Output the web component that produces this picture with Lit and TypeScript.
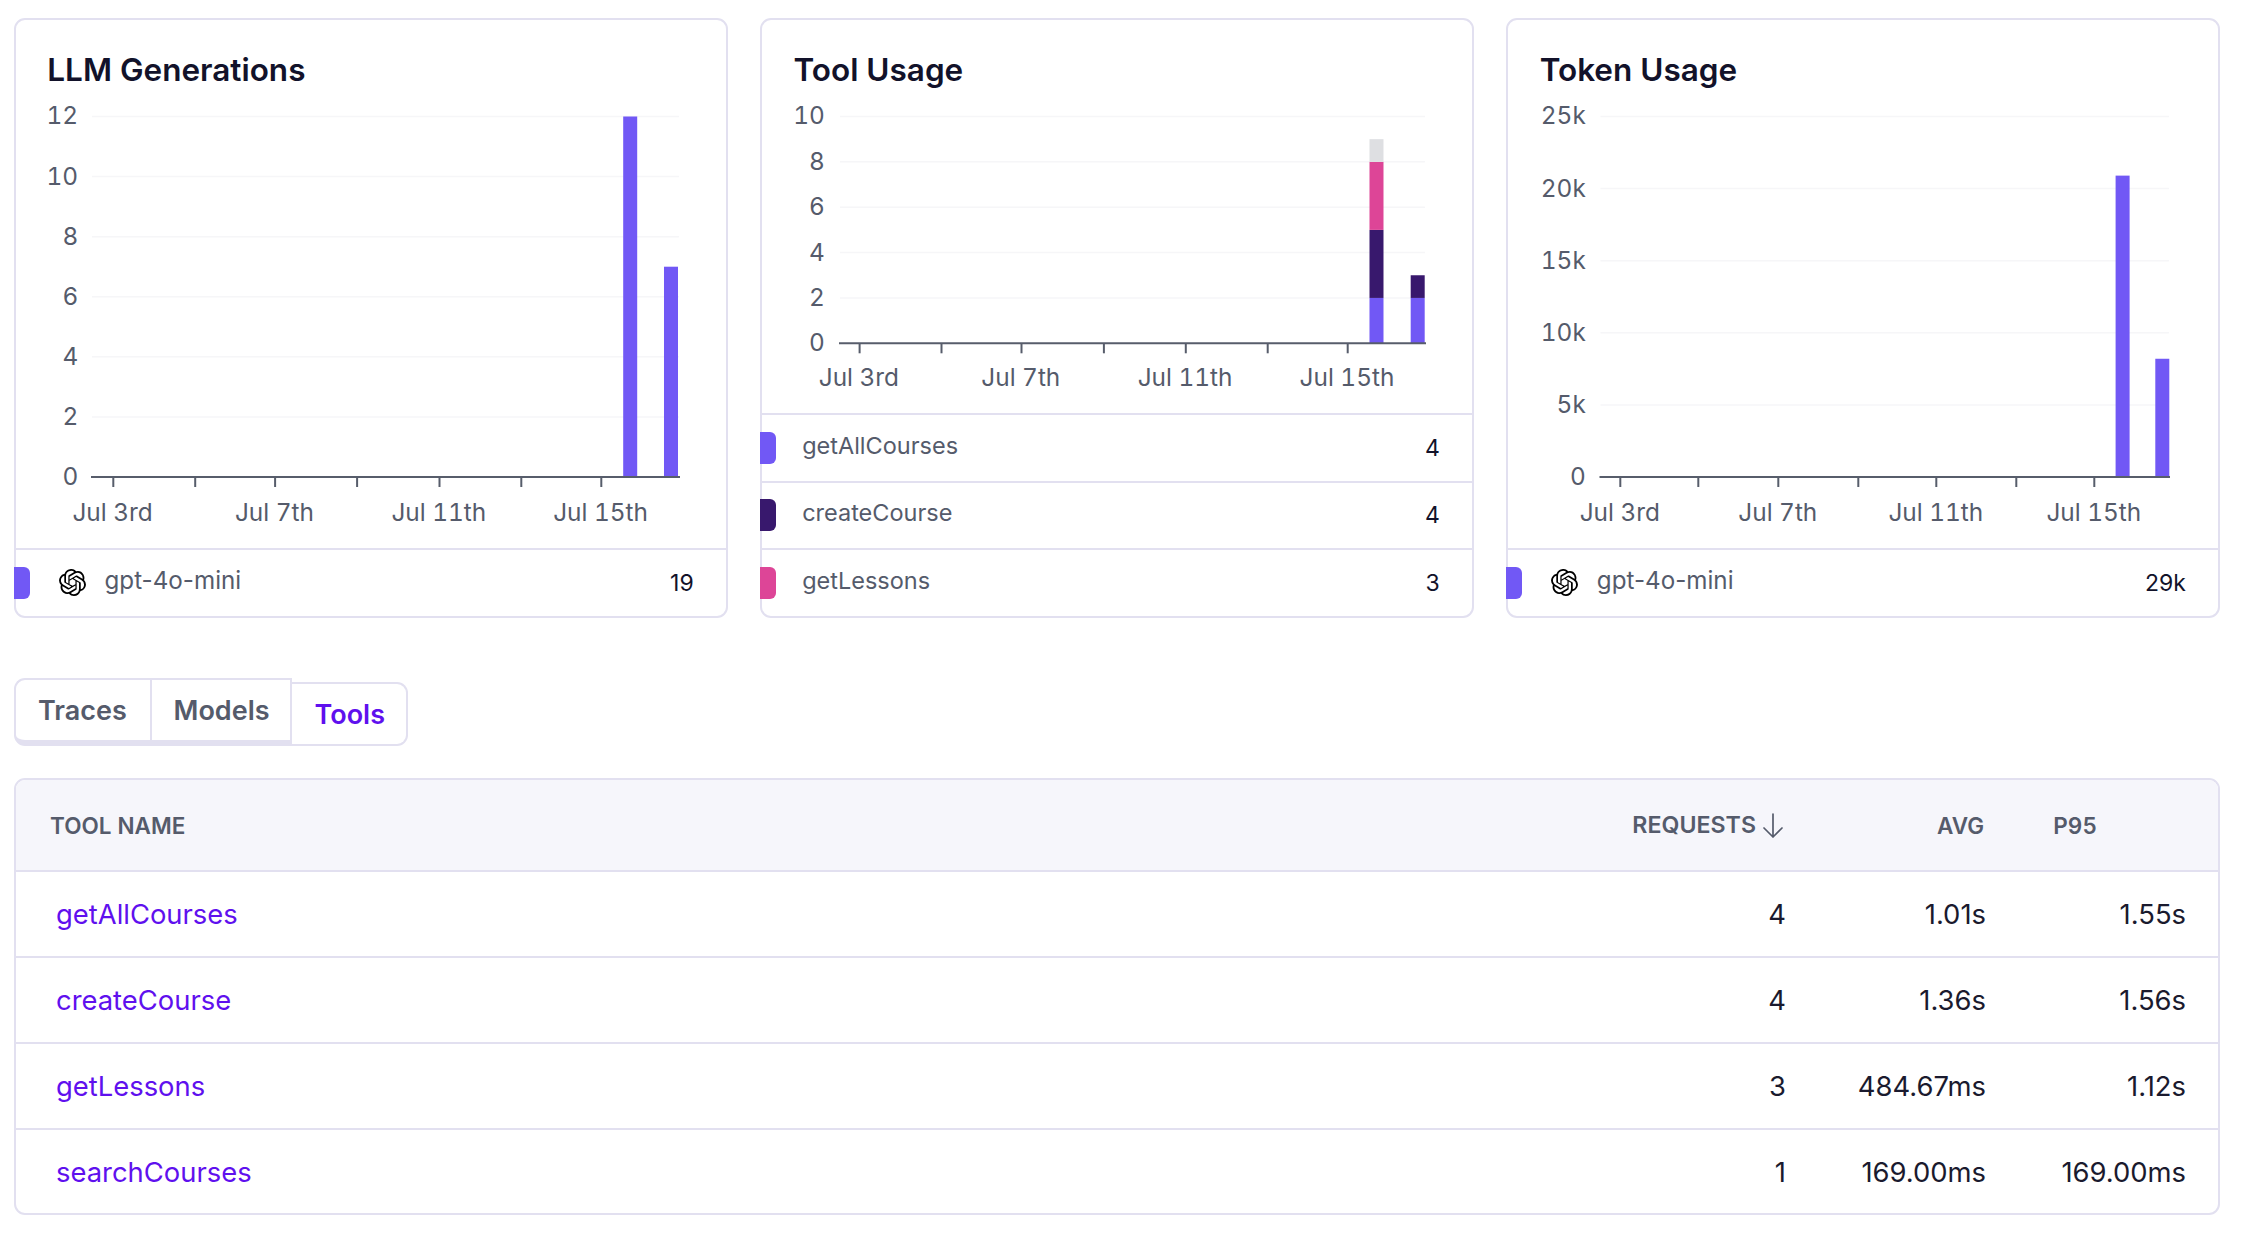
import { LitElement, html, css, svg } from "lit";
import { customElement } from "lit/decorators.js";

const PURPLE = "#7158f5";
const DARK = "#38186d";
const PINK = "#dd4597";
const GRAY = "#dedfe2";
const OPENAI =
  "M22.2819 9.8211a5.9847 5.9847 0 0 0-.5157-4.9108 6.0462 6.0462 0 0 0-6.5098-2.9A6.0651 6.0651 0 0 0 4.9807 4.1818a5.9847 5.9847 0 0 0-3.9977 2.9 6.0462 6.0462 0 0 0 .7427 7.0966 5.98 5.98 0 0 0 .511 4.9107 6.051 6.051 0 0 0 6.5146 2.9001A5.9847 5.9847 0 0 0 13.2599 24a6.0557 6.0557 0 0 0 5.7718-4.2058 5.9894 5.9894 0 0 0 3.9977-2.9001 6.0557 6.0557 0 0 0-.7475-7.0729zm-9.022 12.6081a4.4755 4.4755 0 0 1-2.8764-1.0408l.1419-.0804 4.7783-2.7582a.7948.7948 0 0 0 .3927-.6813v-6.7369l2.02 1.1686a.071.071 0 0 1 .038.052v5.5826a4.504 4.504 0 0 1-4.4945 4.4944zm-9.6607-4.1254a4.4708 4.4708 0 0 1-.5346-3.0137l.142.0852 4.783 2.7582a.7712.7712 0 0 0 .7806 0l5.8428-3.3685v2.3324a.0804.0804 0 0 1-.0332.0615L9.74 19.9502a4.4992 4.4992 0 0 1-6.1408-1.6464zM2.3408 7.8956a4.485 4.485 0 0 1 2.3655-1.9728V11.6a.7664.7664 0 0 0 .3879.6765l5.8144 3.3543-2.0201 1.1685a.0757.0757 0 0 1-.071 0l-4.8303-2.7865A4.504 4.504 0 0 1 2.3408 7.872zm16.5963 3.8558L13.1038 8.364 15.1192 7.2a.0757.0757 0 0 1 .071 0l4.8303 2.7913a4.4944 4.4944 0 0 1-.6765 8.1042v-5.6772a.79.79 0 0 0-.407-.667zm2.0107-3.0231l-.142-.0852-4.7735-2.7818a.7759.7759 0 0 0-.7854 0L9.409 9.2297V6.8974a.0662.0662 0 0 1 .0284-.0615l4.8303-2.7866a4.4992 4.4992 0 0 1 6.6802 4.66zM8.3065 12.863l-2.02-1.1638a.0804.0804 0 0 1-.038-.0567V6.0742a4.4992 4.4992 0 0 1 7.3757-3.4537l-.142.0805L8.704 5.459a.7948.7948 0 0 0-.3927.6813zm1.0976-2.3654l2.602-1.4998 2.6069 1.4998v2.9994l-2.5974 1.4997-2.6067-1.4997Z";

interface Seg { v: number; c: string }
interface Chart {
  title: string;
  svgH: number;
  y0: number;
  yTop: number;
  max: number;
  ticks: { v: number; l: string }[];
  gridL: number;
  gridR: number;
  labelR: number;
  xTicks: number[];
  xLabels: [number, string][];
  labelY: number;
  bars: { x: number; segs: Seg[] }[];
  legend: { name: string; color: string; value: string; icon?: boolean }[];
}

const T = 100; // page y at which the svg begins (title block ends)
const xl = (a: number, b: number, c: number, d: number): [number, string][] => [
  [a, "Jul 3rd"],
  [b, "Jul 7th"],
  [c, "Jul 11th"],
  [d, "Jul 15th"],
];

const CHARTS: Chart[] = [
  {
    title: "LLM Generations",
    svgH: 448.1,
    y0: 477 - T,
    yTop: 116.5 - T,
    max: 12,
    ticks: [0, 2, 4, 6, 8, 10, 12].map((v) => ({ v, l: String(v) })),
    gridL: 77,
    gridR: 664,
    labelR: 63.2,
    xTicks: [98.3, 180.2, 260.1, 342.1, 424.5, 506.3, 586.3],
    xLabels: xl(97.6, 259.4, 423.8, 585.6),
    labelY: 521 - T,
    bars: [
      { x: 608.2, segs: [{ v: 12, c: PURPLE }] },
      { x: 649, segs: [{ v: 7, c: PURPLE }] },
    ],
    legend: [{ name: "gpt-4o-mini", color: PURPLE, value: "19", icon: true }],
  },
  {
    title: "Tool Usage",
    svgH: 313.3,
    y0: 343.3 - T,
    yTop: 116.5 - T,
    max: 10,
    ticks: [0, 2, 4, 6, 8, 10].map((v) => ({ v, l: String(v) })),
    gridL: 79,
    gridR: 664,
    labelR: 63.9,
    xTicks: [98.6, 180.5, 260.5, 342.9, 424.8, 506.7, 586.7],
    xLabels: xl(97.9, 259.8, 424.1, 586),
    labelY: 386 - T,
    bars: [
      {
        x: 608.5,
        segs: [
          { v: 2, c: PURPLE },
          { v: 3, c: DARK },
          { v: 3, c: PINK },
          { v: 1, c: GRAY },
        ],
      },
      {
        x: 649.7,
        segs: [
          { v: 2, c: PURPLE },
          { v: 1, c: DARK },
        ],
      },
    ],
    legend: [
      { name: "getAllCourses", color: PURPLE, value: "4" },
      { name: "createCourse", color: DARK, value: "4" },
      { name: "getLessons", color: PINK, value: "3" },
    ],
  },
  {
    title: "Token Usage",
    svgH: 448.1,
    y0: 477 - T,
    yTop: 116.5 - T,
    max: 25000,
    ticks: [0, 5000, 10000, 15000, 20000, 25000].map((v) => ({
      v,
      l: v === 0 ? "0" : `${v / 1000}k`,
    })),
    gridL: 93.5,
    gridR: 662,
    labelR: 78.8,
    xTicks: [113.3, 191.3, 271.3, 351.3, 429.3, 509.3, 587.3],
    xLabels: xl(112.8, 270.8, 428.8, 586.8),
    labelY: 521 - T,
    bars: [
      { x: 608.6, segs: [{ v: 20900, c: PURPLE }] },
      { x: 648.3, segs: [{ v: 8200, c: PURPLE }] },
    ],
    legend: [{ name: "gpt-4o-mini", color: PURPLE, value: "29k", icon: true }],
  },
];

const ROWS = [
  ["getAllCourses", "4", "1.01s", "1.55s"],
  ["createCourse", "4", "1.36s", "1.56s"],
  ["getLessons", "3", "484.67ms", "1.12s"],
  ["searchCourses", "1", "169.00ms", "169.00ms"],
];

function chartSvg(c: Chart) {
  const w = 709;
  const scale = (c.y0 - c.yTop) / c.max;
  return html`<svg class="chart" viewBox="0 0 ${w} ${c.svgH}" width="${w}" height="${c.svgH}">
    ${c.ticks.map((t) => {
      const y = c.y0 - t.v * scale;
      return svg`
        ${t.v !== 0
          ? svg`<line x1=${c.gridL} x2=${c.gridR} y1=${y} y2=${y} class="grid"></line>`
          : ""}
        <text x=${c.labelR} y=${y + 8} text-anchor="end" class="lbl">${t.l}</text>`;
    })}
    ${c.bars.map((b) => {
      let acc = 0;
      return b.segs.map((s) => {
        const h = s.v * scale;
        acc += h;
        return svg`<rect x=${b.x} y=${c.y0 - acc} width="14" height=${h} fill=${s.c}></rect>`;
      });
    })}
    <line x1=${c.gridL - 1} x2=${c.gridR + 1} y1=${c.y0} y2=${c.y0} class="axis"></line>
    ${c.xTicks.map(
      (x) => svg`<line x1=${x} x2=${x} y1=${c.y0} y2=${c.y0 + 10} class="tick"></line>`
    )}
    ${c.xLabels.map(
      ([x, l]) => svg`<text x=${x} y=${c.labelY} text-anchor="middle" class="lbl">${l}</text>`
    )}
  </svg>`;
}

@customElement("app-root")
export class AppRoot extends LitElement {
  static styles = css`
    :host {
      display: block;
      font-family: Inter, "Liberation Sans", sans-serif;
      background: #fff;
      min-height: 1252px;
      box-sizing: border-box;
      padding: 18.3px 46px 0 14px;
      color: #111827;
    }
    .cards {
      display: grid;
      grid-template-columns: repeat(3, 1fr);
      gap: 32.5px;
    }
    .card {
      border: 2px solid #e2e0f0;
      border-radius: 11px;
      height: 599.4px;
      box-sizing: border-box;
      display: flex;
      flex-direction: column;
    }
    .title {
      height: 79.7px;
      box-sizing: border-box;
      padding: 32px 0 0 31.3px;
      font-size: 31.5px;
      line-height: 36px;
      font-weight: 600;
      color: #12122a;
      flex: none;
    }
    .chart {
      display: block;
      flex: none;
      margin-left: -1px;
    }
    .chart .lbl {
      font-size: 24.4px;
      font-variant-numeric: tabular-nums;
      fill: #555b6b;
      font-family: Inter, "Liberation Sans", sans-serif;
    }
    .chart .grid {
      stroke: #f6f6f8;
      stroke-width: 1.5;
    }
    .chart .axis,
    .chart .tick {
      stroke: #575d6b;
      stroke-width: 2;
    }
    .legend {
      flex: 1 1 67.4px;
      box-sizing: border-box;
      border-top: 2px solid #e2e0f0;
      display: flex;
      align-items: center;
      padding-right: 32px;
    }
    .swatch {
      width: 16px;
      height: 32px;
      margin-left: -2px;
      border-radius: 0 6px 6px 0;
      flex: none;
    }
    .legend svg {
      width: 27px;
      height: 27px;
      margin-left: 29px;
      flex: none;
      display: block;
    }
    .name {
      font-size: 23.5px;
      color: #555b6b;
      margin-left: 26px;
      flex: 1;
      position: relative;
      top: -2.5px;
    }
    .name.icon {
      margin-left: 18.5px;
      font-size: 24.2px;
    }
    .val {
      font-size: 23px;
      color: #12122a;
    }
    .tabs {
      display: flex;
      align-items: flex-end;
      margin-top: 60.6px;
      height: 67.4px;
    }
    .tab {
      box-sizing: border-box;
      font-size: 27px;
      font-weight: 600;
      color: #555b6b;
      background: #fff;
      border: 2px solid #e2e0f0;
      height: 67.4px;
      border-bottom-width: 6px;
      padding-top: 14px;
      line-height: 34px;
    }
    .t1 {
      width: 136px;
      padding-left: 22px;
      border-radius: 11px 0 0 11px;
      border-right: none;
    }
    .t2 {
      width: 142px;
      padding-left: 21.5px;
      border-radius: 0;
    }
    .t3 {
      width: 115.6px;
      height: 63.4px;
      padding: 13.5px 0 0 22.5px;
      border-left: none;
      border-bottom-width: 2px;
      border-radius: 0 11px 11px 0;
      color: #5f10ee;
    }
    .table {
      margin-top: 32.6px;
      border: 2px solid #e2e0f0;
      border-radius: 11px;
      overflow: hidden;
      height: 436.7px;
      box-sizing: border-box;
    }
    .row {
      display: grid;
      grid-template-columns: 1fr 200px 200px 200px;
      padding-right: 32px;
      align-items: center;
      height: 86px;
      box-sizing: border-box;
      border-top: 2px solid #e2e0f0;
      font-size: 27.4px;
      color: #1a1a2e;
    }
    .row.head {
      height: 89.7px;
      border-top: none;
      background: #f6f6fb;
      font-size: 22.5px;
      font-weight: 600;
      color: #555b6b;
      padding-left: 34px;
      font-variant-numeric: tabular-nums;
    }
    .row.head > div:last-child {
      padding-right: 89px;
    }
    .cell {
      text-align: right;
    }
    .req {
      display: flex;
      justify-content: flex-end;
      align-items: center;
      gap: 5px;
      font-size: 23.2px;
    }
    .req svg {
      width: 24px;
      height: 27px;
      display: block;
      margin-right: 1px;
    }
    .row a {
      color: #5f10ee;
      text-decoration: none;
      padding-left: 40px;
    }
    .row .cell.avgh {
      padding-right: 2px;
    }
  `;

  render() {
    return html`
      <div class="cards">
        ${CHARTS.map(
          (c) => html`<section class="card">
            <div class="title">${c.title}</div>
            ${chartSvg(c)}
            ${c.legend.map(
              (l) => html`<div class="legend">
                <span class="swatch" style="background:${l.color}"></span>
                ${l.icon
                  ? html`<svg viewBox="0 0 24 24" fill="#000"><path d=${OPENAI}></path></svg>`
                  : ""}
                <span class="name ${l.icon ? "icon" : ""}">${l.name}</span>
                <span class="val">${l.value}</span>
              </div>`
            )}
          </section>`
        )}
      </div>
      <div class="tabs">
        <div class="tab t1">Traces</div>
        <div class="tab t2">Models</div>
        <div class="tab t3">Tools</div>
      </div>
      <div class="table">
        <div class="row head">
          <div>TOOL NAME</div>
          <div class="cell req">
            REQUESTS
            <svg viewBox="0 0 24 27" fill="none" stroke="#555b6b" stroke-width="1.7" stroke-linecap="round" stroke-linejoin="round">
              <path d="M12 2v23M3 16l9 9 9-9"></path>
            </svg>
          </div>
          <div class="cell avgh">AVG</div>
          <div class="cell">P95</div>
        </div>
        ${ROWS.map(
          (r) => html`<div class="row">
            <a>${r[0]}</a>
            <div class="cell">${r[1]}</div>
            <div class="cell">${r[2]}</div>
            <div class="cell">${r[3]}</div>
          </div>`
        )}
      </div>
    `;
  }
}
